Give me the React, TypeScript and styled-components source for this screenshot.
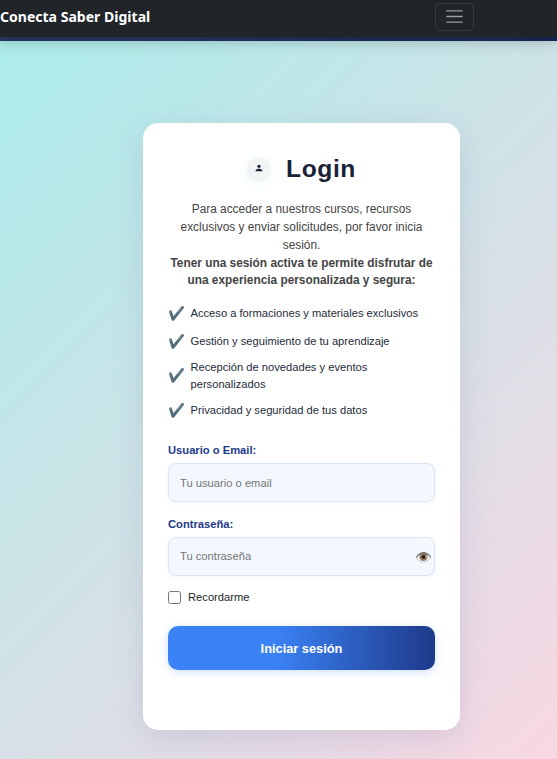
import React from "react";
import styled, { createGlobalStyle } from "styled-components";

const GlobalStyle = createGlobalStyle`
  *, *::before, *::after { box-sizing: border-box; }
  html, body { margin: 0; padding: 0; }
  body {
    font-family: "Liberation Sans", Arial, sans-serif;
    color: #212529;
    overflow: hidden;
  }
`;

const Page = styled.div`
  display: flex;
  flex-direction: column;
  height: 759px;
  background: linear-gradient(135deg, #a8edea 0%, #fed6e3 107%);
`;

const Navbar = styled.header`
  position: relative;
  display: flex;
  flex: none;
  align-items: flex-start;
  justify-content: space-between;
  height: 41px;
  padding: 3px 83px 0 0;
  background: #212529;
  border-bottom: 4px solid;
  border-image: linear-gradient(90deg, #243358, #14264f) 1;
  box-shadow: 0 2px 12px rgba(0, 0, 0, 0.18);
`;

const Brand = styled.span`
  font: 700 14px/28px "Noto Sans", sans-serif;
  letter-spacing: 0.02px;
  color: #fff;
`;

const Toggler = styled.button`
  display: flex;
  align-items: center;
  justify-content: center;
  width: 39px;
  height: 28px;
  padding: 0 0 1px;
  background: transparent;
  border: 1px solid rgba(255, 255, 255, 0.1);
  border-radius: 5px;
`;

const Main = styled.main`
  display: flex;
  flex: 1;
  align-items: flex-start;
  padding: 82px 0 0 143px;
`;

const Card = styled.section`
  width: 317px;
  height: 607px;
  padding: 30px 25px 0;
  background: #fff;
  border-radius: 15px;
  box-shadow: 0 8px 32px rgba(60, 60, 130, 0.13);
`;

const Heading = styled.div`
  display: flex;
  align-items: center;
  justify-content: center;
  gap: 15px;
  height: 32px;
`;

const Avatar = styled.span`
  display: flex;
  align-items: center;
  justify-content: center;
  width: 24px;
  height: 24px;
  padding-bottom: 2px;
  background: #f3f4f6;
  border-radius: 50%;
  box-shadow: 0 2px 8px rgba(168, 237, 234, 0.25);
`;

const Title = styled.h1`
  margin: 0;
  font-size: 24.6px;
  line-height: 32px;
  letter-spacing: 0.6px;
  color: #1a2238;
`;

const Intro = styled.p`
  margin: 16.15px 0 0;
  font-size: 11.87px;
  line-height: 17.79px;
  text-align: center;
  color: #444;
`;

const Benefits = styled.ul`
  display: flex;
  flex-direction: column;
  gap: 7px;
  margin: 13.3px 0 0;
  padding: 0;
  list-style: none;
`;

const Benefit = styled.li`
  display: flex;
  align-items: center;
  gap: 6.5px;
  min-height: 21px;
  font-size: 11.16px;
  line-height: 17px;
  color: #232b3a;
`;

const Check = styled.span`
  flex: none;
  width: 16px;
  font-size: 13.6px;
  line-height: 16px;
`;

const Form = styled.form`
  display: flex;
  flex-direction: column;
  margin-top: 20px;
`;

const Label = styled.label`
  height: 22px;
  padding-top: 1px;
  font-size: 11.2px;
  font-weight: 700;
  line-height: 17px;
  color: #1e3a8a;
`;

const Field = styled.div`
  position: relative;
  display: flex;
  height: 39px;
  margin-bottom: 13px;
`;

const Input = styled.input`
  width: 100%;
  padding: 0 11px;
  font: 11.2px "Liberation Sans", Arial, sans-serif;
  background: #f3f8ff;
  border: 1px solid #dbe4f3;
  border-radius: 8px;
  outline: none;
  box-shadow: 0 1px 4px rgba(59, 130, 246, 0.07);
  &[type="password"] { padding-bottom: 2px; }
  &::placeholder { color: #757575; opacity: 1; }
`;

const Reveal = styled.span`
  position: absolute;
  top: 10.6px;
  right: 3px;
  font-size: 13.6px;
  line-height: 20px;
`;

const Remember = styled.label`
  display: flex;
  align-items: center;
  gap: 7px;
  height: 17px;
  font-size: 11.2px;
  line-height: 17px;
`;

const Checkbox = styled.input`
  width: 13px;
  height: 13px;
  margin: 0;
`;

const Submit = styled.button`
  height: 44px;
  margin-top: 20px;
  font: 700 12.8px "Liberation Sans", Arial, sans-serif;
  color: #fff;
  background: linear-gradient(90deg, #3b82f6 0%, #3b82f6 40%, #1e3a8a 100%);
  border: 0;
  border-radius: 10px;
  box-shadow: 0 2px 8px rgba(59, 130, 246, 0.25);
`;

const benefits = [
  "Acceso a formaciones y materiales exclusivos",
  "Gestión y seguimiento de tu aprendizaje",
  "Recepción de novedades y eventos personalizados",
  "Privacidad y seguridad de tus datos",
];

export default function App() {
  return (
    <>
      <GlobalStyle />
      <Page>
        <Navbar>
          <Brand>Conecta Saber Digital</Brand>
          <Toggler type="button" aria-label="Menú">
            <svg width="21" height="21" viewBox="0 0 30 30">
              <path
                stroke="rgba(255,255,255,.55)"
                strokeLinecap="round"
                strokeMiterlimit="10"
                strokeWidth="2"
                d="M4 7h22M4 15h22M4 23h22"
              />
            </svg>
          </Toggler>
        </Navbar>
        <Main>
          <Card>
            <Heading>
              <Avatar>
                <svg width="10" height="10" viewBox="0 0 24 24" fill="#1a2238">
                  <path d="M12 12c2.2 0 4-1.8 4-4s-1.8-4-4-4-4 1.800-4 4 1.800 4 4 4zm0 2c-2.700 0-8 1.300-8 4v2h16v-2c0-2.700-5.300-4-8-4z" />
                </svg>
              </Avatar>
              <Title>Login</Title>
            </Heading>
            <Intro>
              Para acceder a nuestros cursos, recursos exclusivos y enviar
              solicitudes, por favor inicia sesión.
              <br />
              <b>
                Tener una sesión activa te permite disfrutar de una experiencia
                personalizada y segura:
              </b>
            </Intro>
            <Benefits>
              {benefits.map((text) => (
                <Benefit key={text}>
                  <Check>✔️</Check>
                  <span>{text}</span>
                </Benefit>
              ))}
            </Benefits>
            <Form>
              <Label htmlFor="user">Usuario o Email:</Label>
              <Field>
                <Input id="user" placeholder="Tu usuario o email" />
              </Field>
              <Label htmlFor="pass">Contraseña:</Label>
              <Field>
                <Input id="pass" type="password" placeholder="Tu contraseña" />
                <Reveal>👁️</Reveal>
              </Field>
              <Remember>
                <Checkbox type="checkbox" />
                Recordarme
              </Remember>
              <Submit type="button">Iniciar sesión</Submit>
            </Form>
          </Card>
        </Main>
      </Page>
    </>
  );
}
